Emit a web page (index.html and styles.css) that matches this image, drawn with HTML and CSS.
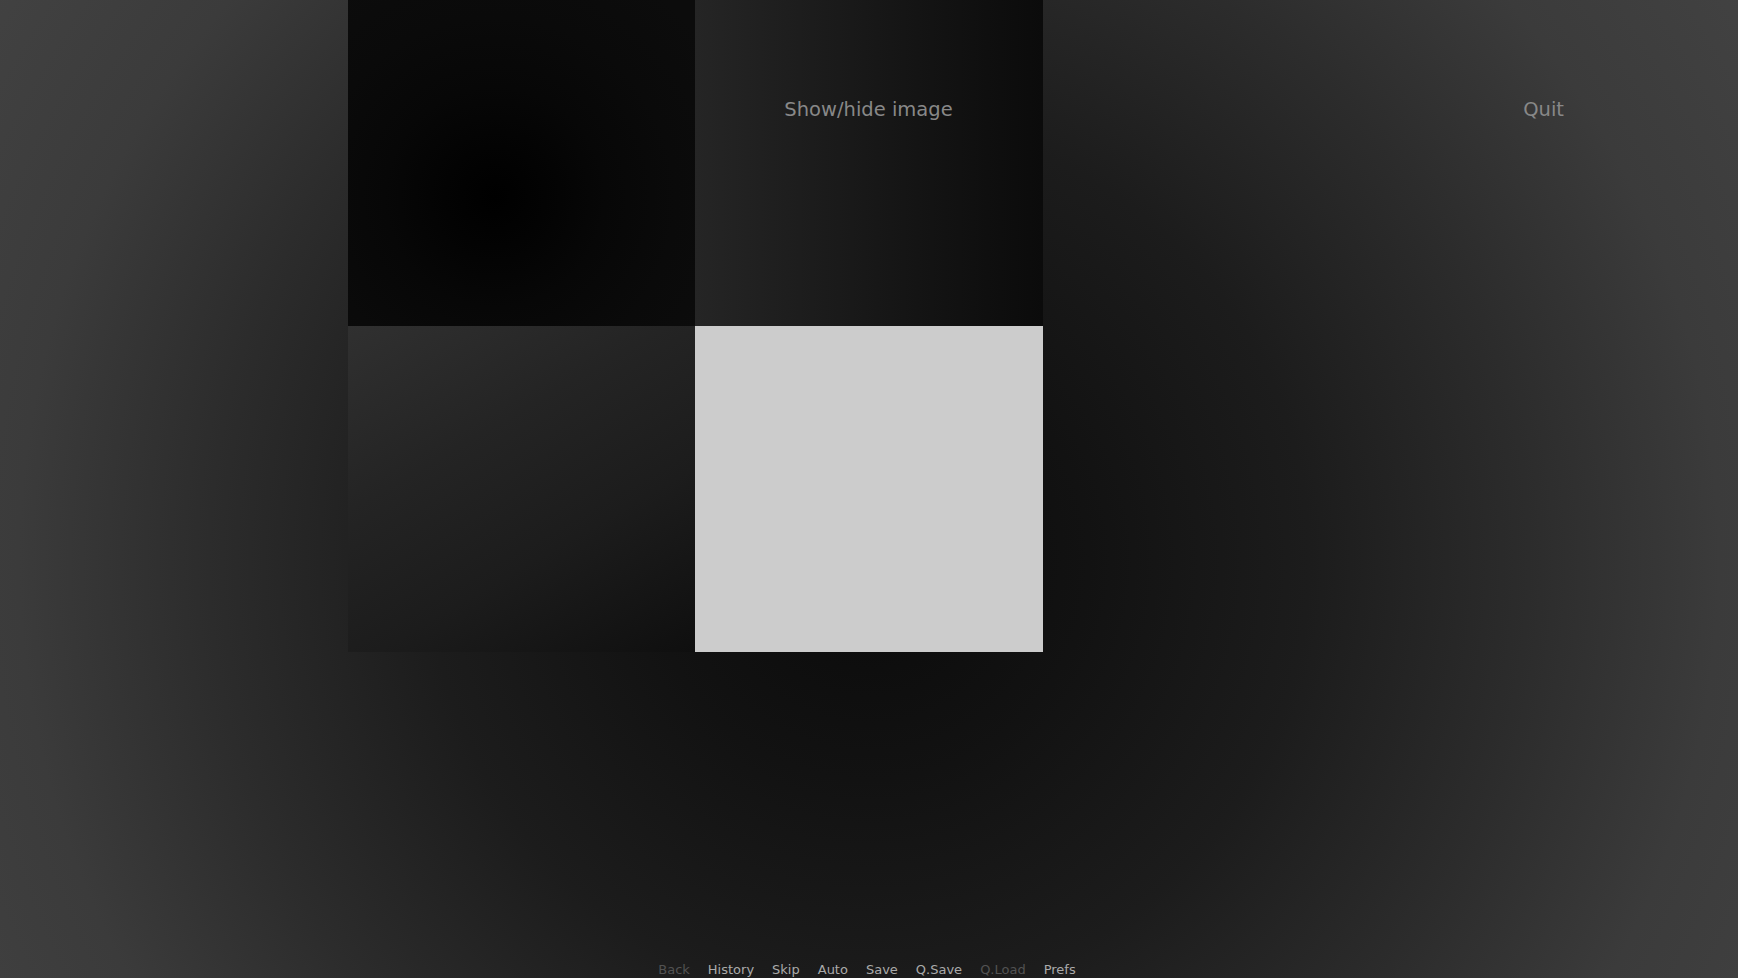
FILE: index.html
```
<!DOCTYPE html>
<html lang="en">
<head>
<meta charset="utf-8">
<title>Game menu</title>
<link rel="stylesheet" href="styles.css">
</head>
<body>
<div class="screen">
  <div class="stage">
    <div class="tiles">
      <div class="tile tile-tl"></div>
      <div class="tile tile-tr"></div>
      <div class="tile tile-bl"></div>
      <div class="tile tile-br"></div>
    </div>
    <div class="topbar">
      <span class="spacer"></span>
      <span class="top-btn center-btn">Show/hide image</span>
      <span class="top-btn quit-btn">Quit</span>
    </div>
  </div>
  <nav class="quick">
    <span class="qbtn off">Back</span>
    <span class="qbtn">History</span>
    <span class="qbtn">Skip</span>
    <span class="qbtn">Auto</span>
    <span class="qbtn">Save</span>
    <span class="qbtn">Q.Save</span>
    <span class="qbtn off">Q.Load</span>
    <span class="qbtn">Prefs</span>
  </nav>
</div>
</body>
</html>
```
FILE: styles.css
```
html, body {
  margin: 0;
  padding: 0;
  width: 100%;
  height: 100%;
  overflow: hidden;
}

body {
  font-family: "DejaVu Sans", "Liberation Sans", sans-serif;
  background: #2a2a2a;
}

.screen {
  width: 100vw;
  height: 100vh;
  display: grid;
  grid-template-rows: 1fr auto;
  background: radial-gradient(circle at 869px 560px,
    #0a0a0a 0px,
    #121212 220px,
    #1c1c1c 440px,
    #2c2c2c 660px,
    #3b3b3b 850px,
    #424242 1050px);
}

.stage {
  display: grid;
  grid-template-areas: "stack";
  align-items: start;
}

.tiles {
  grid-area: stack;
  margin-left: 348px;
  width: 695px;
  height: 652px;
  display: grid;
  grid-template-columns: 347px 348px;
  grid-template-rows: 326px 326px;
}

.tile-tl {
  background: radial-gradient(circle at 147px 197px,
    #000000 0px, #030303 50px, #070707 110px, #0a0a0a 180px, #0c0c0c 260px);
}

.tile-tr {
  background: linear-gradient(90deg, #252525 0%, #1d1d1d 30%, #151515 60%, #0b0b0b 100%);
}

.tile-bl {
  background: linear-gradient(150deg, #303030 0%, #242424 35%, #1c1c1c 65%, #0f0f0f 100%);
}

.tile-br {
  background: #cccccc;
}

.topbar {
  grid-area: stack;
  display: grid;
  grid-template-columns: 1fr auto 1fr;
  padding-top: 98px;
  font-size: 19.5px;
  color: #888888;
}

.top-btn {
  white-space: nowrap;
}

.center-btn {
  margin-left: -1px;
}

.quit-btn {
  justify-self: end;
  padding-right: 174px;
}

.quick {
  display: flex;
  justify-content: center;
  gap: 18px;
  padding-right: 4px;
  padding-bottom: 1px;
  font-size: 13px;
  color: #aaaaaa;
}

.qbtn.off {
  color: #525252;
}
```
